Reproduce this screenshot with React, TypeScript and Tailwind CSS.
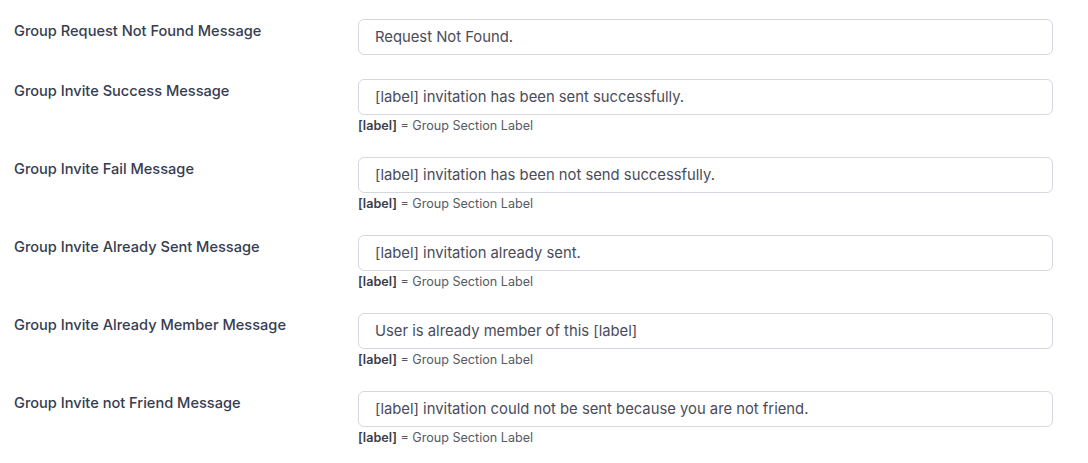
const rows: { label: string; value: string; help: boolean }[] = [
  { label: "Group Request Not Found Message", value: "Request Not Found.", help: false },
  { label: "Group Invite Success Message", value: "[label] invitation has been sent successfully.", help: true },
  { label: "Group Invite Fail Message", value: "[label] invitation has been not send successfully.", help: true },
  { label: "Group Invite Already Sent Message", value: "[label] invitation already sent.", help: true },
  { label: "Group Invite Already Member Message", value: "User is already member of this [label]", help: true },
  { label: "Group Invite not Friend Message", value: "[label] invitation could not be sent because you are not friend.", help: true },
];

export default function App() {
  return (
    <div
      className="min-h-screen bg-white pt-[19px] pl-[14px] pr-[35px] flex flex-col gap-[24px]"
      style={{ fontFamily: "Inter, 'Noto Sans', sans-serif" }}
    >
      {rows.map((r) => (
        <div key={r.label} className="flex items-start">
          <label className="w-[344px] shrink-0 pt-[2px] text-[14.6px] leading-[21px] font-medium text-[#363c51]">
            {r.label}
          </label>
          <div className="flex-1">
            <input
              readOnly
              value={r.value}
              className="w-full h-[36px] rounded-[6px] border border-[#d5d8e1] bg-white px-[16px] text-[14.8px] text-[#4a4b5a] outline-none"
            />
            {r.help && (
              <div className="h-[18px] text-[12.6px] leading-[22px] text-[#555a66]">
                <span className="font-semibold text-[#3a3d4a]">[label]</span> = Group Section Label
              </div>
            )}
          </div>
        </div>
      ))}
    </div>
  );
}
